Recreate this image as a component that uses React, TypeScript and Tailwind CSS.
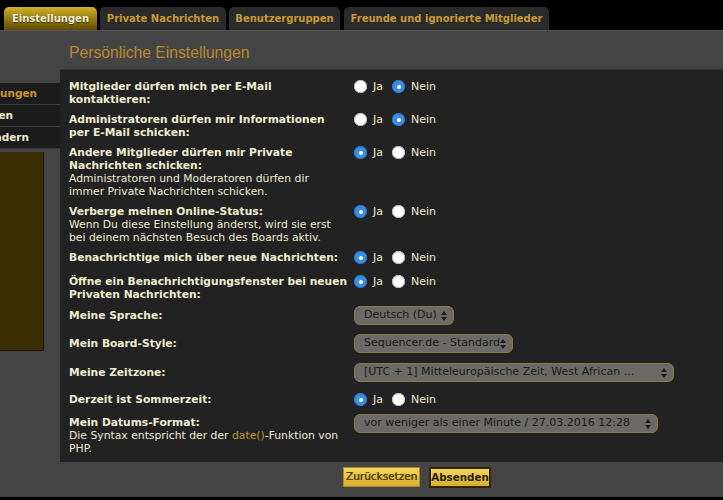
import React from "react";

const FONT = { fontFamily: '"DejaVu Sans", Verdana, sans-serif' };

function Radio({ checked }: { checked: boolean }) {
  return checked ? (
    <span className="flex h-[13px] w-[13px] shrink-0 items-center justify-center rounded-full bg-[#3b8ee8] shadow-[inset_0_0_0_1px_#2f74c4]">
      <span className="block h-[4px] w-[4px] rounded-full bg-white" />
    </span>
  ) : (
    <span className="block h-[13px] w-[13px] shrink-0 rounded-full bg-white shadow-[inset_0_0_0_1px_#b8b8b8]" />
  );
}

function YesNo({ yes }: { yes: boolean }) {
  return (
    <div className="flex h-[13px] items-center text-[11px] leading-[13px] text-[#efecd0]">
      <Radio checked={yes} />
      <span className="ml-[6px]">Ja</span>
      <span className="ml-[9px] flex">
        <Radio checked={!yes} />
      </span>
      <span className="ml-[6px]">Nein</span>
    </div>
  );
}

function Arrows() {
  return (
    <svg width="6" height="10" viewBox="0 0 6 10" className="shrink-0">
      <path d="M3 0 L6 4 L0 4 Z" fill="#1e1e1e" />
      <path d="M0 6 L6 6 L3 10 Z" fill="#1e1e1e" />
    </svg>
  );
}

function Select({ text, w }: { text: string; w: string }) {
  return (
    <div
      className={`${w} flex h-[19px] items-center justify-between rounded-[6px] border border-[#8c7b45] bg-[#6b6a66] pl-[9px] pr-[6px] text-[11px] text-[#1a1a1a]`}
    >
      <span className="whitespace-nowrap">{text}</span>
      <Arrows />
    </div>
  );
}

function Row({
  mt,
  label,
  desc,
  right,
  center,
  minH,
}: {
  mt: string;
  label: React.ReactNode;
  desc?: React.ReactNode;
  right: React.ReactNode;
  center?: boolean;
  minH?: string;
}) {
  return (
    <div className={`${mt} ${minH ?? ""} flex ${center ? "items-center" : "items-start"}`}>
      <div className="w-[285px] shrink-0 whitespace-nowrap leading-[13px] text-[#efecd0]">
        <div className="text-[10.7px] font-bold">{label}</div>
        {desc && <div className="text-[10.8px]">{desc}</div>}
      </div>
      <div>{right}</div>
    </div>
  );
}

export default function App() {
  return (
    <div className="flex h-[500px] w-[723px] flex-col overflow-hidden bg-black" style={FONT}>
      {/* Tabs */}
      <div className="flex h-[30px] shrink-0 items-end gap-[3px] pl-[4px]">
        <div className="flex h-[23px] w-[93px] items-center justify-center rounded-t-[5px] bg-gradient-to-b from-[#d2b22a] to-[#5f4b02] text-[10px] font-bold text-[#f3efd2] [text-shadow:0_1px_1px_#3a2c00]">
          Einstellungen
        </div>
        <div className="flex h-[23px] w-[126px] items-center justify-center rounded-t-[5px] bg-[#2b2b2b] text-[10px] font-bold text-[#c99a33]">
          Private Nachrichten
        </div>
        <div className="flex h-[23px] w-[111px] items-center justify-center rounded-t-[5px] bg-[#2b2b2b] text-[10px] font-bold text-[#c99a33]">
          Benutzergruppen
        </div>
        <div className="ml-[1px] flex h-[23px] w-[205px] items-center justify-center rounded-t-[5px] bg-[#2b2b2b] text-[10px] font-bold text-[#c99a33]">
          Freunde und ignorierte Mitglieder
        </div>
      </div>

      {/* Body */}
      <div className="flex h-[467px] shrink-0 border-t border-[#555] bg-[#444]">
        {/* Sidebar */}
        <div className="w-[60px] shrink-0 pt-[52px]">
          <div className="flex h-[22px] items-center justify-end overflow-hidden border-b border-[#3a3a3a] bg-[#1c1c1c] pr-[23px] text-[10.5px] font-bold text-[#c9962b]">
            <span className="whitespace-nowrap">Persönliche Einstellungen</span>
          </div>
          <div className="flex h-[22px] items-center justify-end overflow-hidden border-b border-[#3a3a3a] bg-[#1c1c1c] pr-[47px] text-[10.5px] font-bold text-[#efecd0]">
            <span className="whitespace-nowrap">Beitrags-Einstellungen</span>
          </div>
          <div className="flex h-[22px] items-center justify-end overflow-hidden border-b border-[#3a3a3a] bg-[#1c1c1c] pr-[31px] text-[10.5px] font-bold text-[#efecd0]">
            <span className="whitespace-nowrap">Anzeigeoptionen ändern</span>
          </div>
          <div className="mt-[3px] h-[199px] w-[44px] border-r border-b border-[#1a1400] bg-[#3b2f03]" />
        </div>

        {/* Main */}
        <div className="flex min-w-0 flex-1 flex-col">
          <div
            className="flex h-[38px] items-center pl-[9px] pt-[5px] text-[15.7px] text-[#b88a2c]"
            style={{ fontFamily: '"Liberation Sans", Arial, sans-serif' }}
          >
            Persönliche Einstellungen
          </div>
          <div className="h-[393px] border-t border-[#333] bg-[#222] pl-[9px] pt-[10px]">
            <Row
              mt="mt-0"
              label={<>Mitglieder dürfen mich per E-Mail<br />kontaktieren:</>}
              right={<YesNo yes={false} />}
            />
            <Row
              mt="mt-[7px]"
              label={<>Administratoren dürfen mir Informationen<br />per E-Mail schicken:</>}
              right={<YesNo yes={false} />}
            />
            <Row
              mt="mt-[7px]"
              label={<>Andere Mitglieder dürfen mir Private<br />Nachrichten schicken:</>}
              desc={<>Administratoren und Moderatoren dürfen dir<br />immer Private Nachrichten schicken.</>}
              right={<YesNo yes={true} />}
            />
            <Row
              mt="mt-[7px]"
              label="Verberge meinen Online-Status:"
              desc={<>Wenn Du diese Einstellung änderst, wird sie erst<br />bei deinem nächsten Besuch des Boards aktiv.</>}
              right={<YesNo yes={true} />}
            />
            <Row
              mt="mt-[7px]"
              minH="min-h-[17px]"
              label="Benachrichtige mich über neue Nachrichten:"
              right={<YesNo yes={true} />}
            />
            <Row
              mt="mt-[7px]"
              label={<>Öffne ein Benachrichtigungsfenster bei neuen<br />Privaten Nachrichten:</>}
              right={<YesNo yes={true} />}
            />
            <Row
              mt="mt-[5px]"
              center
              label="Meine Sprache:"
              right={<Select text="Deutsch (Du)" w="w-[100px]" />}
            />
            <Row
              mt="mt-[9px]"
              center
              label="Mein Board-Style:"
              right={<Select text="Sequencer.de - Standard" w="w-[159px]" />}
            />
            <Row
              mt="mt-[10px]"
              center
              label="Meine Zeitzone:"
              right={<Select text="[UTC + 1] Mitteleuropäische Zeit, West African ..." w="w-[320px]" />}
            />
            <Row
              mt="mt-[11px]"
              label="Derzeit ist Sommerzeit:"
              right={<YesNo yes={true} />}
            />
            <div className="mt-[8px] flex items-start">
              <div className="w-[285px] shrink-0 whitespace-nowrap pt-[2px] leading-[13px] text-[#efecd0]">
                <div className="text-[10.7px] font-bold">Mein Datums-Format:</div>
                <div className="text-[10.8px]">
                  Die Syntax entspricht der der <span className="text-[#c9962b]">date()</span>-Funktion von
                  <br />
                  PHP.
                </div>
              </div>
              <Select text="vor weniger als einer Minute / 27.03.2016 12:28" w="w-[304px]" />
            </div>
          </div>
          <div className="flex gap-[9px] pl-[283px] pt-[5px]">
            <div className="flex h-[20px] w-[77px] items-center justify-center border border-[#a88a26] bg-gradient-to-b from-[#f4d75a] to-[#d6af2c] text-[10.5px] text-[#4d3d05] [text-shadow:0.4px_0_0_#4d3d05]">
              Zurücksetzen
            </div>
            <div className="flex h-[21px] w-[62px] items-center justify-center border-2 border-[#2e2400] bg-gradient-to-b from-[#f4d75a] to-[#d6af2c] text-[10.3px] font-bold text-[#2a2000]">
              Absenden
            </div>
          </div>
        </div>
      </div>
      <div className="flex-1 bg-black" />
    </div>
  );
}
